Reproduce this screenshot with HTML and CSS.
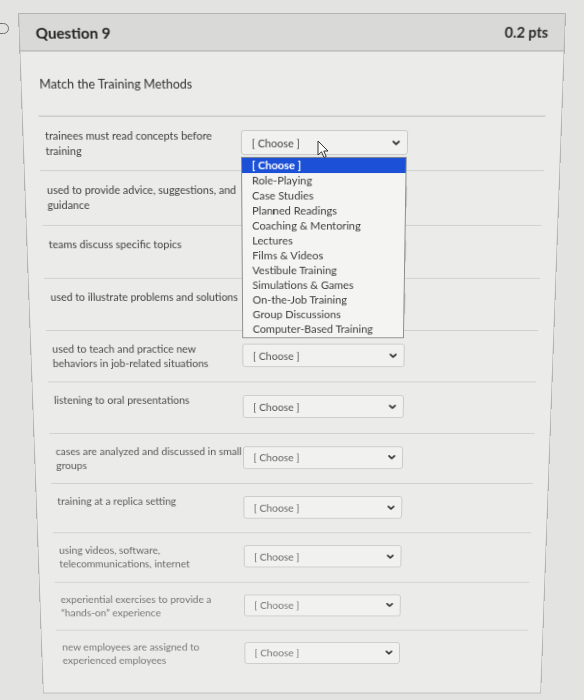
FILE: index.html
```html
<!DOCTYPE html>
<html lang="en">
<head>
<meta charset="utf-8">
<title>Question 9</title>
<link rel="stylesheet" href="styles.css">
</head>
<body>
<div class="page">
  <span class="flag"></span>
  <section class="card">
    <header class="card-head">
      <h2 class="q-name">Question 9</h2>
      <span class="pts">0.2 pts</span>
    </header>
    <div class="card-body">
      <p class="intro">Match the Training Methods</p>
      <div class="rows">
        <div class="row">
          <div class="prompt">trainees must read concepts before training</div>
          <div class="select">
            <span class="sel-text">[ Choose ]</span>
            <svg class="chev" viewBox="0 0 8 5" width="8" height="5"><path d="M1.2 1 L4 3.8 L6.8 1" fill="none" stroke="#3a3a3a" stroke-width="1.9" stroke-linecap="round" stroke-linejoin="round"/></svg>
            <ul class="menu">
              <li class="menu-item active">[ Choose ]</li>
              <li class="menu-item">Role-Playing</li>
              <li class="menu-item">Case Studies</li>
              <li class="menu-item">Planned Readings</li>
              <li class="menu-item">Coaching &amp; Mentoring</li>
              <li class="menu-item">Lectures</li>
              <li class="menu-item">Films &amp; Videos</li>
              <li class="menu-item">Vestibule Training</li>
              <li class="menu-item">Simulations &amp; Games</li>
              <li class="menu-item">On-the-Job Training</li>
              <li class="menu-item">Group Discussions</li>
              <li class="menu-item">Computer-Based Training</li>
            </ul>
          </div>
        </div>
        <div class="row">
          <div class="prompt">used to provide advice, suggestions, and guidance</div>
          <div class="select"><span class="sel-text">[ Choose ]</span><svg class="chev" viewBox="0 0 8 5" width="8" height="5"><path d="M1.2 1 L4 3.8 L6.8 1" fill="none" stroke="#3a3a3a" stroke-width="1.9" stroke-linecap="round" stroke-linejoin="round"/></svg></div>
        </div>
        <div class="row">
          <div class="prompt">teams discuss specific topics</div>
          <div class="select"><span class="sel-text">[ Choose ]</span><svg class="chev" viewBox="0 0 8 5" width="8" height="5"><path d="M1.2 1 L4 3.8 L6.8 1" fill="none" stroke="#3a3a3a" stroke-width="1.9" stroke-linecap="round" stroke-linejoin="round"/></svg></div>
        </div>
        <div class="row">
          <div class="prompt">used to illustrate problems and solutions</div>
          <div class="select"><span class="sel-text">[ Choose ]</span><svg class="chev" viewBox="0 0 8 5" width="8" height="5"><path d="M1.2 1 L4 3.8 L6.8 1" fill="none" stroke="#3a3a3a" stroke-width="1.9" stroke-linecap="round" stroke-linejoin="round"/></svg></div>
        </div>
        <div class="row">
          <div class="prompt">used to teach and practice new behaviors in job-related situations</div>
          <div class="select"><span class="sel-text">[ Choose ]</span><svg class="chev" viewBox="0 0 8 5" width="8" height="5"><path d="M1.2 1 L4 3.8 L6.8 1" fill="none" stroke="#3a3a3a" stroke-width="1.9" stroke-linecap="round" stroke-linejoin="round"/></svg></div>
        </div>
        <div class="row">
          <div class="prompt">listening to oral presentations</div>
          <div class="select"><span class="sel-text">[ Choose ]</span><svg class="chev" viewBox="0 0 8 5" width="8" height="5"><path d="M1.2 1 L4 3.8 L6.8 1" fill="none" stroke="#3a3a3a" stroke-width="1.9" stroke-linecap="round" stroke-linejoin="round"/></svg></div>
        </div>
        <div class="row">
          <div class="prompt">cases are analyzed and discussed in small groups</div>
          <div class="select"><span class="sel-text">[ Choose ]</span><svg class="chev" viewBox="0 0 8 5" width="8" height="5"><path d="M1.2 1 L4 3.8 L6.8 1" fill="none" stroke="#3a3a3a" stroke-width="1.9" stroke-linecap="round" stroke-linejoin="round"/></svg></div>
        </div>
        <div class="row">
          <div class="prompt">training at a replica setting</div>
          <div class="select"><span class="sel-text">[ Choose ]</span><svg class="chev" viewBox="0 0 8 5" width="8" height="5"><path d="M1.2 1 L4 3.8 L6.8 1" fill="none" stroke="#3a3a3a" stroke-width="1.9" stroke-linecap="round" stroke-linejoin="round"/></svg></div>
        </div>
        <div class="row">
          <div class="prompt">using videos, software, telecommunications, internet</div>
          <div class="select"><span class="sel-text">[ Choose ]</span><svg class="chev" viewBox="0 0 8 5" width="8" height="5"><path d="M1.2 1 L4 3.8 L6.8 1" fill="none" stroke="#3a3a3a" stroke-width="1.9" stroke-linecap="round" stroke-linejoin="round"/></svg></div>
        </div>
        <div class="row">
          <div class="prompt">experiential exercises to provide a “hands-on” experience</div>
          <div class="select"><span class="sel-text">[ Choose ]</span><svg class="chev" viewBox="0 0 8 5" width="8" height="5"><path d="M1.2 1 L4 3.8 L6.8 1" fill="none" stroke="#3a3a3a" stroke-width="1.9" stroke-linecap="round" stroke-linejoin="round"/></svg></div>
        </div>
        <div class="row">
          <div class="prompt">new employees are assigned to experienced employees</div>
          <div class="select"><span class="sel-text">[ Choose ]</span><svg class="chev" viewBox="0 0 8 5" width="8" height="5"><path d="M1.2 1 L4 3.8 L6.8 1" fill="none" stroke="#3a3a3a" stroke-width="1.9" stroke-linecap="round" stroke-linejoin="round"/></svg></div>
        </div>
      </div>
    </div>
  </section>
  <svg class="cursor" viewBox="0 0 12 19" width="14" height="19"><path d="M1 1 L1 15 L4.5 11.8 L7 17.5 L9.2 16.5 L6.8 11 L11 11 Z" fill="#fafafa" stroke="#333" stroke-width="1" stroke-linejoin="round"/></svg>
</div>
</body>
</html>
```

FILE: styles.css
```css
* { box-sizing: border-box; }

html, body {
  margin: 0;
  padding: 0;
  background: #e3e3e1;
  font-family: Lato, "Open Sans", "Liberation Sans", sans-serif;
  color: #3a3a3a;
}

.page {
  position: relative;
  width: 584px;
  height: 700px;
  overflow: hidden;
  padding: 13px 0 0 18px;
}

.flag {
  position: absolute;
  left: -9px;
  top: 23px;
  width: 18px;
  height: 11px;
  border: 1.5px solid #6f6f6f;
  border-radius: 6px;
}

.card {
  width: 548px;
  border: 1px solid #b4b4b2;
  background: #ebebe9;
  transform-origin: 50% 0;
  transform: perspective(1000px) rotateX(-7.6deg);
}

.card-head {
  height: 38px;
  display: flex;
  align-items: center;
  justify-content: space-between;
  padding: 0 16px 0 16px;
  background: #d9d9d7;
  border-bottom: 1px solid #a9a9a7;
}

.q-name {
  margin: 0;
  font-size: 15.2px;
  font-weight: 700;
  color: #222;
  line-height: 20px;
}

.pts {
  font-size: 14.5px;
  font-weight: 700;
  color: #2a2a2a;
  line-height: 20px;
}

.card-body {
  padding: 0 16px 18px 16px;
}

.intro {
  margin: 0;
  padding: 26px 0 24px 2px;
  font-size: 12.5px;
  line-height: 16px;
  color: #333;
  border-bottom: 1px solid #bdbdbb;
}

.rows {
  display: flex;
  flex-direction: column;
}

.row {
  display: grid;
  grid-template-columns: 199px 170px;
  align-items: start;
  height: 57.3px;
  padding: 12px 0 0 6px;
  border-bottom: 1px solid #cfcfcd;
}

.row:last-child {
  border-bottom: none;
}

.prompt {
  font-size: 11px;
  line-height: 16px;
  color: #3e3e3e;
}

.row:nth-child(n+5) .prompt { color: #4a4a4a; }
.row:nth-child(n+7) .prompt { color: #585858; }
.row:nth-child(n+9) .prompt { color: #686868; }
.row:nth-child(n+10) .prompt { color: #777; }

.select {
  position: relative;
  margin-top: 2px;
  height: 26px;
  display: flex;
  align-items: center;
  justify-content: space-between;
  padding: 0 7px 0 10px;
  background: #f1f1f0;
  border: 1px solid #c9c9c7;
  border-radius: 3px;
}

.sel-text {
  font-size: 11px;
  color: #555;
}

.row:first-child .sel-text { color: #444; }
.row:nth-child(n+7) .sel-text { color: #666; }
.row:nth-child(n+10) .sel-text { color: #777; }

.chev {
  display: block;
}

.menu {
  position: absolute;
  left: -1px;
  top: 27px;
  width: 169px;
  margin: 0;
  padding: 0 0 1px 0;
  list-style: none;
  background: #f4f4f3;
  border: 1px solid #8c8c8a;
  z-index: 2;
}

.menu-item {
  height: 16px;
  line-height: 16px;
  padding-left: 10px;
  font-size: 11.3px;
  color: #3c3c3c;
  white-space: nowrap;
}

.menu-item.active {
  background: #1c50d6;
  color: #ffffff;
  font-weight: 700;
}

.cursor {
  position: absolute;
  left: 316px;
  top: 140px;
  z-index: 5;
}
```
